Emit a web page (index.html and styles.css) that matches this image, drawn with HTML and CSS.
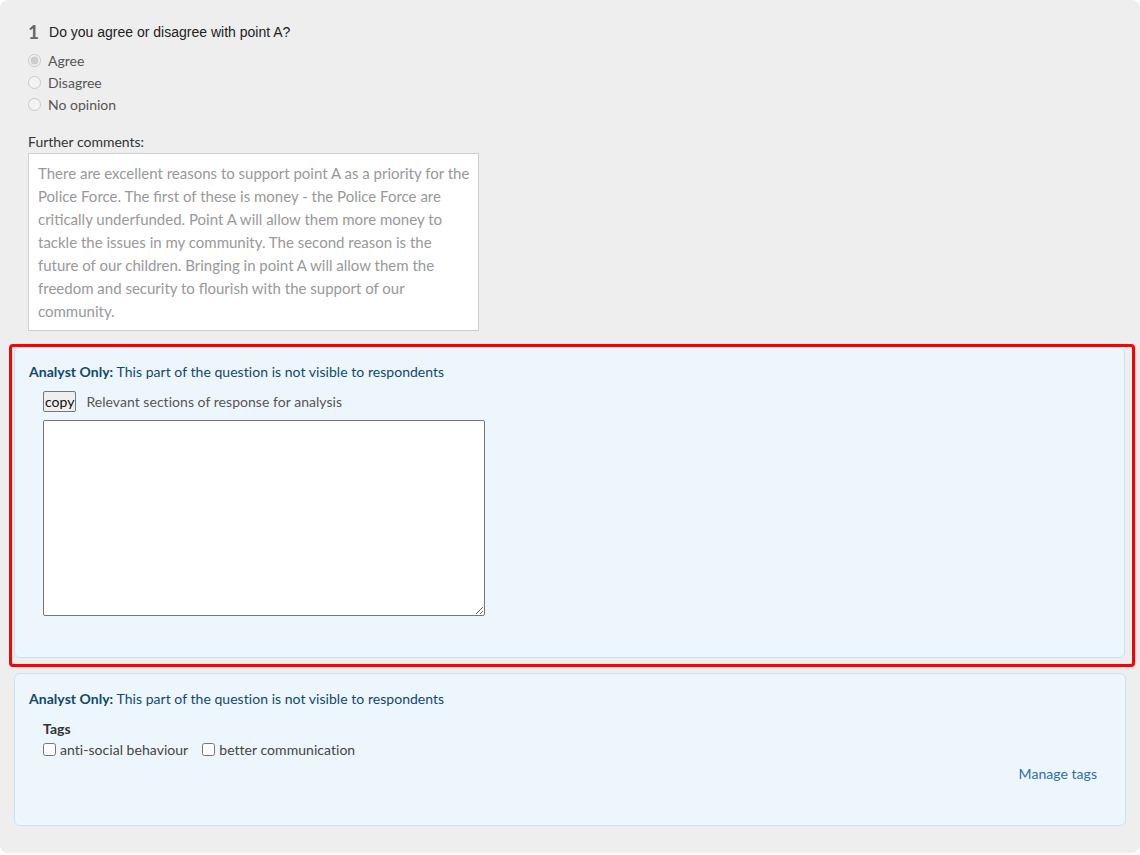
FILE: index.html
```html
<!DOCTYPE html>
<html lang="en">
<head>
    <meta charset="UTF-8">
    <meta name="viewport" content="width=device-width, initial-scale=1.0">
    <title>Response analysis</title>
    <link rel="stylesheet" href="styles.css">
</head>
<body>
    <div class="question-page">
        <div class="question-title">
            <span class="question-number">1</span>
            <span class="question-text">Do you agree or disagree with point A?</span>
        </div>
        <div class="options">
            <label class="option"><input type="radio" name="q1" checked disabled> Agree</label>
            <label class="option"><input type="radio" name="q1" disabled> Disagree</label>
            <label class="option"><input type="radio" name="q1" disabled> No opinion</label>
        </div>

        <div class="comments-label">Further comments:</div>
        <div class="readonly-answer">There are excellent reasons to support point A as a priority for the Police Force. The first of these is money - the Police Force are critically underfunded. Point A will allow them more money to tackle the issues in my community. The second reason is the future of our children. Bringing in point A will allow them the freedom and security to flourish with the support of our community.</div>

        <div class="highlight">
            <div class="analyst-panel">
                <div class="analyst-note"><strong>Analyst Only:</strong> This part of the question is not visible to respondents</div>
                <div class="analyst-body">
                    <div class="copy-row">
                        <button class="copy-btn">copy</button>
                        <span class="copy-label">Relevant sections of response for analysis</span>
                    </div>
                    <textarea class="analysis-box"></textarea>
                </div>
            </div>
        </div>

        <div class="analyst-panel tags-panel">
            <div class="analyst-note"><strong>Analyst Only:</strong> This part of the question is not visible to respondents</div>
            <div class="analyst-body">
                <div class="tags-title">Tags</div>
                <div class="tag-list">
                    <label class="tag"><input type="checkbox"> anti-social behaviour</label>
                    <label class="tag"><input type="checkbox"> better communication</label>
                </div>
                <div class="manage-row"><a href="#" class="manage-link">Manage tags</a></div>
            </div>
        </div>
    </div>
</body>
</html>
```

FILE: styles.css
```css
body {
    margin: 0;
    background: #fff;
    font-family: Lato, "Open Sans", sans-serif;
    font-size: 14px;
    color: #333;
}
.question-page {
    background: #eeeeee;
    border-radius: 8px;
    padding: 20px 14px 27px 14px;
    width: 1140px;
    box-sizing: border-box;
}
.question-title {
    display: flex;
    align-items: center;
    height: 23px;
    padding-left: 14px;
}
.question-number {
    font-size: 19px;
    font-weight: bold;
    color: #666;
    margin-right: 10px;
}
.question-text {
    font-family: "Liberation Sans", Arial, sans-serif;
    font-size: 14px;
    color: #222;
}
.options {
    margin-top: 6px;
    padding-left: 14px;
}
.option {
    display: flex;
    align-items: center;
    height: 22px;
    color: #555;
}
.option input {
    margin: 0 7px 0 0;
    width: 13px;
    height: 13px;
}
.comments-label {
    margin-top: 17px;
    margin-left: 14px;
    line-height: 20px;
    margin-bottom: 1px;
    color: #333;
}
.readonly-answer {
    margin-left: 14px;
    width: 451px;
    box-sizing: border-box;
    background: #fff;
    border: 1px solid #cfcfcf;
    padding: 8px 5px 7px 9px;
    font-size: 15px;
    line-height: 23px;
    color: #999;
}
.highlight {
    margin: 13px -9px 0 -5px;
    border: 3px solid #ff0000;
    border-radius: 4px;
    padding: 0 7px 6px 2px;
}
.analyst-panel {
    background: #eef6fd;
    border: 1px solid #c8e2f6;
    border-radius: 6px;
    padding: 14px 15px 15px 14px;
    letter-spacing: 0.04px;
}
.analyst-note {
    line-height: 20px;
    color: #0e4a6c;
}
.analyst-body {
    padding-left: 14px;
}
.copy-row {
    display: flex;
    align-items: center;
    margin-top: 9px;
    height: 21px;
}
.copy-btn {
    font-family: Lato, sans-serif;
    font-size: 14px;
    font-weight: 400;
    color: #111;
    background: #efefef;
    border: 1px solid #767676;
    border-radius: 2px;
    padding: 0 1px;
    height: 21px;
    margin-right: 10px;
}
.copy-label {
    color: #555;
}
.analysis-box {
    display: block;
    margin: 8px 0 26px 0;
    width: 442px;
    height: 196px;
    box-sizing: border-box;
    border: 1px solid #767676;
    border-radius: 2px;
    background: #fff;
}
.tags-panel {
    margin-top: 6px;
}
.tags-panel .analyst-note {
    margin-top: 1px;
}
.tags-title {
    margin-top: 10px;
    line-height: 20px;
    font-weight: bold;
    color: #333;
}
.tag-list {
    display: flex;
    height: 20px;
    align-items: center;
}
.tag {
    display: flex;
    align-items: center;
    margin-right: 14px;
    color: #444;
}
.tag input {
    margin: 0 4px 0 0;
    width: 13px;
    height: 13px;
}
.manage-row {
    text-align: right;
    margin-top: 5px;
    margin-bottom: 26px;
    padding-right: 13px;
    line-height: 20px;
}
.manage-link {
    color: #2c6fb0;
    text-decoration: none;
}
```
